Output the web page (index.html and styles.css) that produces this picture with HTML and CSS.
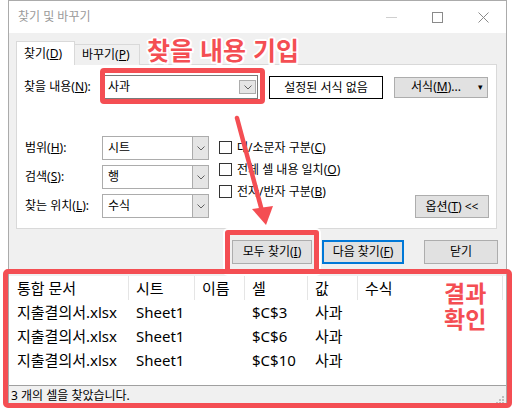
FILE: index.html
```html
<!DOCTYPE html>
<html lang="ko">
<head>
  <meta charset="UTF-8">
  <meta name="viewport" content="width=device-width, initial-scale=1.0">
  <title>찾기 및 바꾸기</title>
  <link rel="stylesheet" href="styles.css">
</head>
<body>
  <div class="screen">
    <div class="window">
      <div class="titlebar">
        <span class="title">찾기 및 바꾸기</span>
        <div class="controls">
          <span class="ctrl"><svg width="11" height="11" viewBox="0 0 11 11"><line x1="0" y1="5.5" x2="11" y2="5.5" stroke="#cfcfcf" stroke-width="1"/></svg></span>
          <span class="ctrl"><svg width="11" height="11" viewBox="0 0 11 11"><rect x="0.5" y="0.5" width="10" height="10" fill="none" stroke="#8a8a8a" stroke-width="1"/></svg></span>
          <span class="ctrl"><svg width="11" height="11" viewBox="0 0 11 11"><path d="M0.5 0.5 L10.5 10.5 M10.5 0.5 L0.5 10.5" stroke="#8a8a8a" stroke-width="1"/></svg></span>
        </div>
      </div>

      <div class="dialog">
        <div class="tabs">
          <div class="tab active">찾기(<u>D</u>)</div>
          <div class="tab">바꾸기(<u>P</u>)</div>
        </div>

        <div class="panel">
          <div class="row-find">
            <span class="label">찾을 내용(<u>N</u>):</span>
            <div class="combo combo-find">
              <span class="value">사과</span>
              <span class="drop"><svg width="8" height="5" viewBox="0 0 8 5"><polyline points="0.5,0.5 4,4 7.5,0.5" fill="none" stroke="#606060" stroke-width="1"/></svg></span>
            </div>
            <div class="format-preview">설정된 서식 없음</div>
            <div class="btn btn-format">서식(<u>M</u>)...<span class="caret">▾</span></div>
          </div>

          <div class="row-options">
            <div class="selects">
              <div class="select-row">
                <span class="label">범위(<u>H</u>):</span>
                <div class="combo">
                  <span class="value">시트</span>
                  <span class="drop"><svg width="8" height="5" viewBox="0 0 8 5"><polyline points="0.5,0.5 4,4 7.5,0.5" fill="none" stroke="#606060" stroke-width="1"/></svg></span>
                </div>
              </div>
              <div class="select-row">
                <span class="label">검색(<u>S</u>):</span>
                <div class="combo">
                  <span class="value">행</span>
                  <span class="drop"><svg width="8" height="5" viewBox="0 0 8 5"><polyline points="0.5,0.5 4,4 7.5,0.5" fill="none" stroke="#606060" stroke-width="1"/></svg></span>
                </div>
              </div>
              <div class="select-row">
                <span class="label">찾는 위치(<u>L</u>):</span>
                <div class="combo">
                  <span class="value">수식</span>
                  <span class="drop"><svg width="8" height="5" viewBox="0 0 8 5"><polyline points="0.5,0.5 4,4 7.5,0.5" fill="none" stroke="#606060" stroke-width="1"/></svg></span>
                </div>
              </div>
            </div>

            <div class="checks">
              <div class="check"><span class="box"></span>대/소문자 구분(<u>C</u>)</div>
              <div class="check"><span class="box"></span>전체 셀 내용 일치(<u>O</u>)</div>
              <div class="check"><span class="box"></span>전자/반자 구분(<u>B</u>)</div>
            </div>

            <div class="btn btn-options">옵션(<u>T</u>) &lt;&lt;</div>
          </div>
        </div>

        <div class="actions">
          <div class="btn btn-all">모두 찾기(<u>I</u>)</div>
          <div class="btn btn-next">다음 찾기(<u>F</u>)</div>
          <div class="btn btn-close">닫기</div>
        </div>
      </div>

      <div class="results">
        <div class="list">
          <div class="list-row list-head">
            <span>통합 문서</span><span>시트</span><span>이름</span><span>셀</span><span>값</span><span>수식</span>
          </div>
          <div class="list-row">
            <span>지출결의서.xlsx</span><span>Sheet1</span><span></span><span>$C$3</span><span>사과</span><span></span>
          </div>
          <div class="list-row">
            <span>지출결의서.xlsx</span><span>Sheet1</span><span></span><span>$C$6</span><span>사과</span><span></span>
          </div>
          <div class="list-row">
            <span>지출결의서.xlsx</span><span>Sheet1</span><span></span><span>$C$10</span><span>사과</span><span></span>
          </div>
        </div>
        <div class="status">
          <span>3 개의 셀을 찾았습니다.</span>
          <svg class="grip" width="8" height="8" viewBox="0 0 8 8">
            <rect x="6" y="0" width="2" height="2" fill="#bdbdbd"/>
            <rect x="3" y="3" width="2" height="2" fill="#bdbdbd"/>
            <rect x="6" y="3" width="2" height="2" fill="#bdbdbd"/>
            <rect x="0" y="6" width="2" height="2" fill="#bdbdbd"/>
            <rect x="3" y="6" width="2" height="2" fill="#bdbdbd"/>
            <rect x="6" y="6" width="2" height="2" fill="#bdbdbd"/>
          </svg>
        </div>
      </div>
    </div>

    <!-- annotations drawn over the screenshot -->
    <div class="mark mark-find"></div>
    <div class="mark mark-all"></div>
    <div class="mark mark-results"></div>
    <div class="note note-find">찾을 내용 기입</div>
    <div class="note note-results">결과<br>확인</div>
    <svg class="arrow" width="514" height="411" viewBox="0 0 514 411">
      <line x1="237" y1="118" x2="262" y2="211" stroke="#f44e53" stroke-width="4.5" stroke-linecap="round"/>
      <polygon points="252,209 273,206 266,225" fill="#f44e53"/>
    </svg>
  </div>
</body>
</html>
```

FILE: styles.css
```css
body {
  margin: 0;
  background-color: #fff;
  font-family: "Noto Sans", "Noto Sans CJK KR", sans-serif;
  font-size: 12px;
  color: #000;
}

.screen {
  position: relative;
  width: 514px;
  height: 411px;
  overflow: hidden;
}

u {
  text-decoration: underline;
  text-underline-offset: 1px;
}

.window {
  margin-left: 8px;
  width: 499px;
  box-sizing: border-box;
  border: 1px solid #ababab;
  background-color: #f0f0f0;
}

.titlebar {
  height: 32px;
  background-color: #fff;
  display: flex;
  align-items: center;
}

.title {
  padding-left: 9px;
  color: #9a9a9a;
  line-height: 16px;
}

.controls {
  margin-left: auto;
  display: flex;
  height: 100%;
}

.ctrl {
  width: 46px;
  display: flex;
  align-items: center;
  justify-content: center;
}

.dialog {
  padding: 8px 10px 8px 7px;
}

.tabs {
  display: flex;
  align-items: flex-end;
  height: 24px;
  margin-bottom: -1px;
  position: relative;
  z-index: 1;
}

.tab {
  box-sizing: border-box;
  height: 21px;
  width: 65px;
  padding-left: 7px;
  border: 1px solid #d9d9d9;
  border-left: none;
  border-bottom: none;
  background-color: #f0f0f0;
  line-height: 20px;
}

.tab.active {
  height: 24px;
  width: 59px;
  border-left: 1px solid #d9d9d9;
  background-color: #fff;
  line-height: 23px;
}

.panel {
  width: 481px;
  box-sizing: border-box;
  background-color: #fff;
  border: 1px solid #d9d9d9;
  padding: 10px 7px 10px 7px;
}

.label {
  width: 78px;
  flex: none;
  line-height: 16px;
}

.row-find {
  display: flex;
  align-items: center;
  height: 24px;
}

.combo {
  box-sizing: border-box;
  height: 24px;
  width: 107px;
  border: 1px solid #acacac;
  background-color: #fff;
  display: flex;
  align-items: stretch;
}

.combo .value {
  flex: 1;
  padding-left: 5px;
  line-height: 21px;
}

.combo .drop {
  width: 15px;
  background-color: #e5e5e5;
  border-left: 1px solid #acacac;
  display: flex;
  align-items: center;
  justify-content: center;
}

.combo-find {
  width: 156px;
  border-color: #7a7a7a;
}

.combo-find .drop {
  margin: 4px 1px 4px 0;
  border: 1px solid #acacac;
}

.format-preview {
  box-sizing: border-box;
  margin-left: 11px;
  width: 114px;
  height: 23px;
  border: 1px solid #000;
  display: flex;
  align-items: center;
  justify-content: center;
}

.btn {
  box-sizing: border-box;
  height: 24px;
  background-color: #e1e1e1;
  border: 1px solid #adadad;
  display: flex;
  align-items: center;
  justify-content: center;
  line-height: 16px;
}

.btn-format {
  margin-left: 11px;
  width: 94px;
  height: 21px;
  position: relative;
  padding-right: 10px;
}

.caret {
  position: absolute;
  right: 4px;
  top: 1px;
  font-size: 9px;
}

.row-options {
  margin-top: 37px;
  display: flex;
  align-items: flex-end;
}

.selects {
  display: flex;
  flex-direction: column;
  gap: 5px;
}

.select-row {
  display: flex;
  align-items: center;
}

.select-row .label {
  padding-left: 1px;
  width: 77px;
}

.checks {
  align-self: flex-start;
  margin-left: 10px;
  display: flex;
  flex-direction: column;
}

.check {
  height: 22px;
  display: flex;
  align-items: center;
}

.check .box {
  box-sizing: border-box;
  width: 13px;
  height: 13px;
  border: 1px solid #333;
  background-color: #fff;
  margin-right: 5px;
}

.btn-options {
  margin-left: auto;
  width: 74px;
  height: 23px;
}

.actions {
  margin-top: 11px;
  margin-right: -2px;
  display: flex;
  justify-content: flex-end;
}

.btn-all {
  width: 80px;
}

.btn-next {
  margin-left: 10px;
  width: 82px;
  border: 2px solid #0078d7;
}

.btn-close {
  margin-left: 20px;
  width: 74px;
}

.results {
  background-color: #fff;
}

.list {
  height: 109px;
  font-size: 15px;
}

.list-row {
  display: grid;
  grid-template-columns: 120px 66px 50px 63px 50px 145px;
  height: 24px;
  line-height: 24px;
}

.list-row span {
  padding-left: 7px;
  white-space: nowrap;
}

.list-row span:first-child {
  padding-left: 8px;
}

.list-head {
  margin-top: 4px;
}

.list-head span {
  border-right: 1px solid #e5e5e5;
}

.status {
  height: 19px;
  border-top: 1px solid #a0a0a0;
  background-color: #f0f0f0;
  display: flex;
  align-items: center;
  padding-left: 2px;
  line-height: 16px;
  position: relative;
}

.grip {
  position: absolute;
  right: 2px;
  bottom: 1px;
}

/* red annotation layer */
.mark {
  position: absolute;
  box-sizing: border-box;
  border: 5px solid #f44e53;
  border-radius: 4px;
}

.mark-find {
  left: 100px;
  top: 68px;
  width: 165px;
  height: 36px;
}

.mark-all {
  left: 225px;
  top: 230px;
  width: 94px;
  height: 44px;
  border-radius: 3px;
  box-shadow: 0 0 0 2px #fff;
}

.mark-results {
  left: 3px;
  top: 269px;
  width: 509px;
  height: 139px;
  border-radius: 5px;
}

.note {
  position: absolute;
  font-family: "Noto Sans CJK KR", sans-serif;
  font-weight: bold;
  color: #f44e53;
  text-shadow: -2px 0 #fff, 2px 0 #fff, 0 -2px #fff, 0 2px #fff,
    -1.5px -1.5px #fff, 1.5px 1.5px #fff, -1.5px 1.5px #fff, 1.5px -1.5px #fff;
}

.note-find {
  left: 147px;
  top: 34px;
  font-size: 25px;
  line-height: 30px;
}

.note-results {
  left: 444px;
  top: 279px;
  font-size: 23px;
  line-height: 26px;
}

.arrow {
  position: absolute;
  left: 0;
  top: 0;
  pointer-events: none;
}
```
